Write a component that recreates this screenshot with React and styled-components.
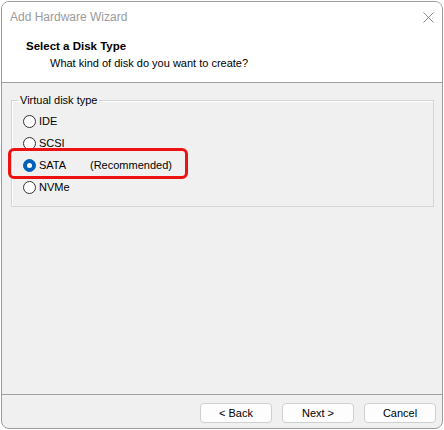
import React, { useState } from "react";
import styled, { createGlobalStyle } from "styled-components";

const GlobalStyle = createGlobalStyle`
  html, body {
    margin: 0;
    padding: 0;
    background: #ffffff;
  }
  body {
    font-family: "Liberation Sans", Arial, sans-serif;
    font-size: 11px;
    color: #000;
  }
`;

const options = [
  { id: "ide", label: "IDE" },
  { id: "scsi", label: "SCSI" },
  { id: "sata", label: "SATA", note: "(Recommended)" },
  { id: "nvme", label: "NVMe" },
];

const App = () => {
  const [selected, setSelected] = useState("sata");

  return (
    <>
      <GlobalStyle />
      <Window>
        <TitleBar>
          <Title>Add Hardware Wizard</Title>
          <CloseButton aria-label="Close">
            <svg width="11" height="11" viewBox="0 0 11 11">
              <path d="M0.5 0.5 L10.5 10.5 M10.5 0.5 L0.5 10.5" stroke="#8a8a8a" strokeWidth="1" />
            </svg>
          </CloseButton>
        </TitleBar>
        <Header>
          <HeaderTitle>Select a Disk Type</HeaderTitle>
          <HeaderSub>What kind of disk do you want to create?</HeaderSub>
        </Header>
        <Body>
          <Group>
            <Legend>Virtual disk type</Legend>
            {options.map((opt) => (
              <RadioRow
                key={opt.id}
                $highlight={opt.id === "sata"}
                onClick={() => setSelected(opt.id)}
              >
                <Radio $checked={selected === opt.id} />
                <RadioLabel>{opt.label}</RadioLabel>
                {opt.note && <Note>{opt.note}</Note>}
              </RadioRow>
            ))}
          </Group>
        </Body>
        <Footer>
          <Button>&lt; Back</Button>
          <Button>Next &gt;</Button>
          <Button>Cancel</Button>
        </Footer>
      </Window>
    </>
  );
};

const Window = styled.div`
  box-sizing: border-box;
  margin: 1px 0 0 1px;
  width: 442px;
  height: 428px;
  border: 1px solid #9c9c9c;
  border-radius: 8px;
  background: #f0f0f0;
  overflow: hidden;
  display: flex;
  flex-direction: column;
`;

const TitleBar = styled.div`
  height: 30px;
  background: #ffffff;
  display: flex;
  align-items: center;
  justify-content: space-between;
  padding: 0 8px 0 8px;
`;

const Title = styled.span`
  color: #9a9a9a;
  font-size: 12px;
`;

const CloseButton = styled.span`
  display: flex;
  align-items: center;
`;

const Header = styled.div`
  background: #ffffff;
  height: 51px;
  border-bottom: 1px solid #a0a0a0;
  padding: 7px 0 0 24px;
  box-sizing: border-box;
`;

const HeaderTitle = styled.div`
  font-weight: bold;
  font-size: 11.5px;
  line-height: 15px;
`;

const HeaderSub = styled.div`
  padding-left: 24px;
  line-height: 15px;
  margin-top: 2px;
`;

const Body = styled.div`
  flex: 1;
  padding: 10px 8px 0 9px;
  border-bottom: 1px solid #a0a0a0;
`;

const Group = styled.fieldset`
  margin: 0;
  padding: 3px 0 8px 0;
  border: 1px solid #d5d5d5;
  box-shadow: inset 1px 1px 0 #ffffff;
  border-radius: 0;
  display: flex;
  flex-direction: column;
`;

const Legend = styled.legend`
  padding: 0 2px;
  margin-left: 6px;
  line-height: 14px;
`;

const RadioRow = styled.div`
  position: relative;
  display: flex;
  align-items: center;
  height: 22px;
  padding-left: 11px;
  cursor: default;
  ${(p) =>
    p.$highlight &&
    `
    &::after {
      content: "";
      position: absolute;
      left: -4px;
      top: -6px;
      width: 180px;
      height: 31px;
      box-sizing: border-box;
      border: 3px solid #ee1111;
      border-radius: 6px;
    }
  `}
`;

const Radio = styled.span`
  box-sizing: border-box;
  width: 13px;
  height: 13px;
  border-radius: 50%;
  background: ${(p) => (p.$checked ? "#005fb8" : "#ffffff")};
  border: 1px solid ${(p) => (p.$checked ? "#005fb8" : "#333333")};
  display: flex;
  align-items: center;
  justify-content: center;
  &::before {
    content: "";
    display: ${(p) => (p.$checked ? "block" : "none")};
    width: 5px;
    height: 5px;
    border-radius: 50%;
    background: #ffffff;
  }
`;

const RadioLabel = styled.span`
  margin-left: 3px;
  width: 51px;
`;

const Note = styled.span``;

const Footer = styled.div`
  height: 33px;
  display: flex;
  justify-content: flex-end;
  align-items: flex-start;
  gap: 10px;
  padding: 8px 6px 0 0;
  box-sizing: border-box;
`;

const Button = styled.button`
  box-sizing: border-box;
  width: 72px;
  height: 20px;
  border: 1px solid #d0d0d0;
  border-radius: 4px;
  background: #fdfdfd;
  font-family: "Liberation Sans", Arial, sans-serif;
  font-size: 11px;
  color: #000;
  padding: 0;
`;

export default App;
